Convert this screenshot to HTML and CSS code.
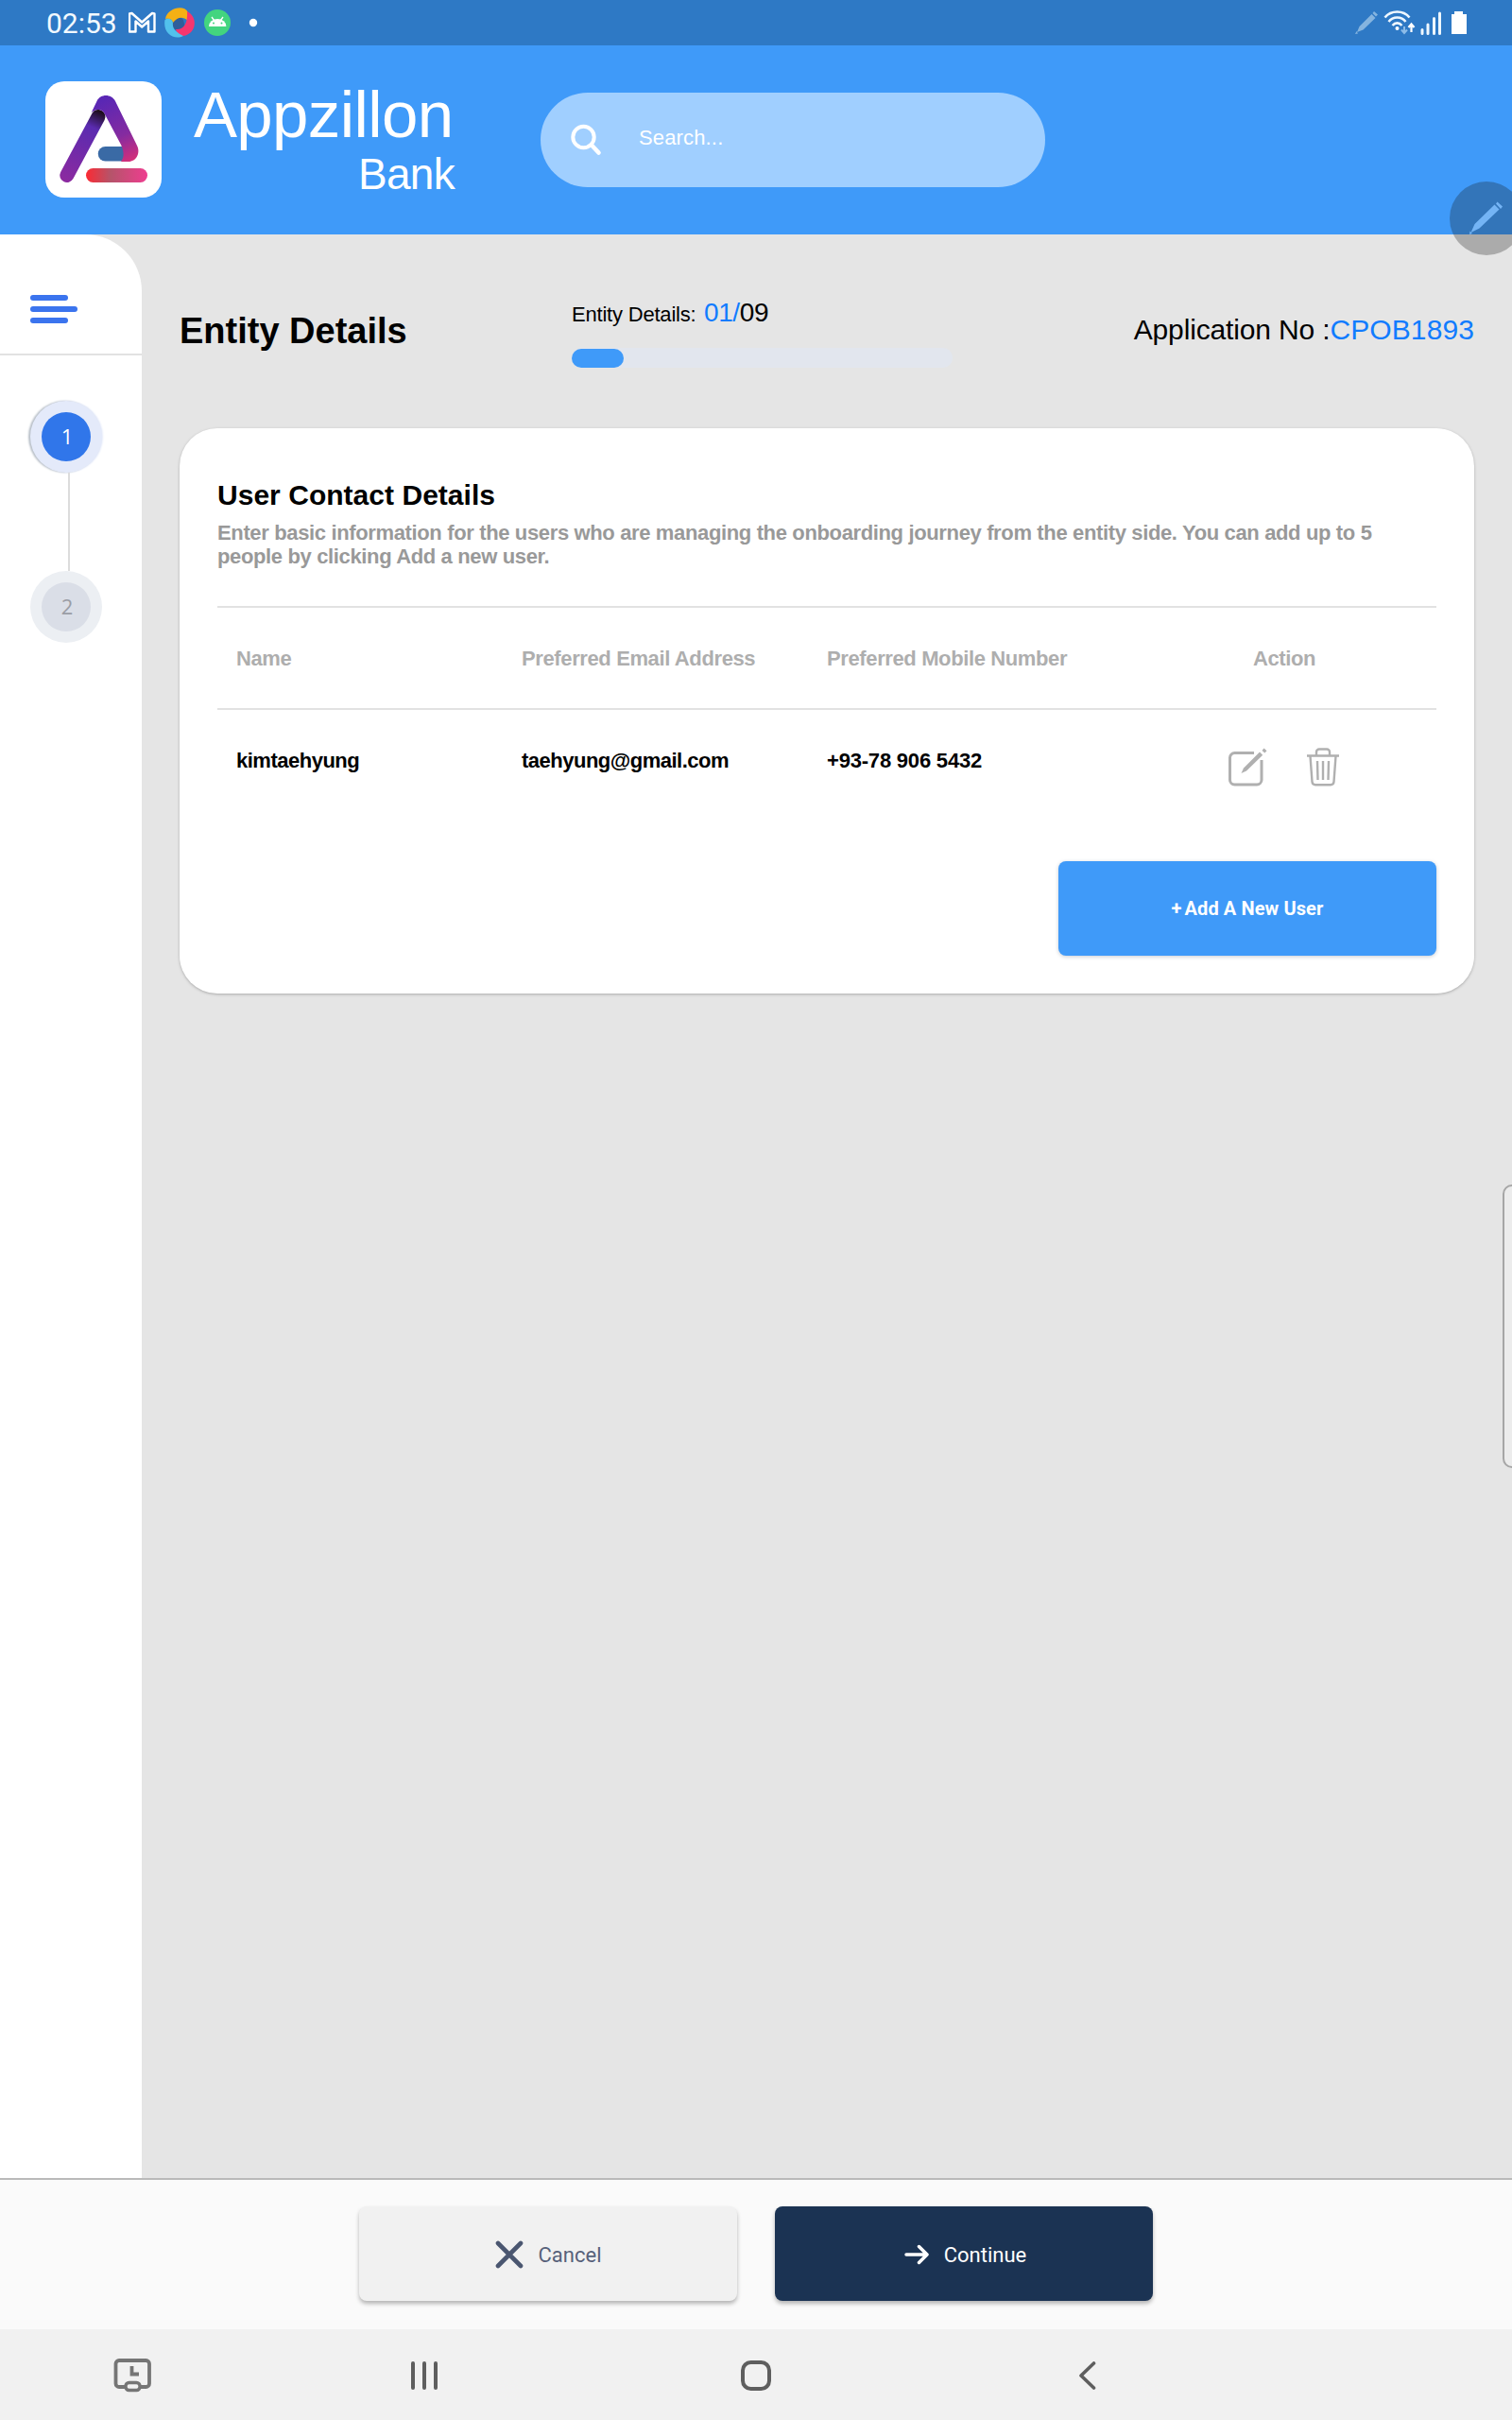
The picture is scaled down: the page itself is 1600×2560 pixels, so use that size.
FILE: index.html
```html
<!DOCTYPE html>
<html lang="en">
<head>
<meta charset="utf-8">
<title>Appzillon Bank - Entity Details</title>
<link rel="stylesheet" href="styles.css">
</head>
<body>
<div class="screen">
  <div class="status-bar">
    <span class="clock">02:53</span>
    <svg class="status-left" width="148" height="34" viewBox="0 0 148 34">
      <path d="M1 26.500V7.500L3.500 7l10.700 9.500L25 7l2.500.5v19H21v-11L14.200 21.500 7.500 15.500v11z" fill="none" stroke="#fff" stroke-width="2.400" stroke-linejoin="round"/>
      <g>
        <path d="M46 14C49 10 55 10 58 14L60 22L52 26L46 22z" fill="#2f5e9a"/>
        <path d="M39 13C41 2 58-3 63 6L63 15C57 10 52 11 47 17C46 13 43 12 39 13z" fill="#f5b014"/>
        <path d="M62 5C74 11 72 29 58 31C53 30 51 28 50 24C58 25 63 18 62 5z" fill="#f5366f"/>
        <path d="M38.500 14C41 12 46 12 47 17C46 24 51 27 58 31C48 36 36 28 38.500 14z" fill="#52c1ec"/>
      </g>
      <circle cx="94" cy="17" r="14" fill="#43d57f"/>
      <path d="M85 21a9.200 8 0 0 1 18.400 0z" fill="#fff"/>
      <path d="M88 11l2.500 3.500M100 11l-2.500 3.500" stroke="#fff" stroke-width="1.300"/>
      <circle cx="90" cy="17.500" r="1" fill="#43d57f"/><circle cx="98.500" cy="17.500" r="1" fill="#43d57f"/>
      <circle cx="132" cy="17" r="4.200" fill="#fff"/>
    </svg>
    <svg class="status-right" width="122" height="26" viewBox="0 0 122 26">
      <g fill="#85b4df"><path d="M4 23l2.500-6L19.500 4l4 4L10.500 20.500zM20.500 3l1.500-2 4 3.500-2 2zM3.500 22l1.500 2.500-3 .5z"/></g>
      <g fill="none" stroke="#eef7ff" stroke-width="2.600">
        <path d="M33.500 7.500C40-.500 53-.500 59.500 7.500M37.500 12C42 6 51 6 55.500 12M41.500 16C44.500 12.500 48.500 12.500 51.500 16"/>
      </g>
      <circle cx="46.500" cy="19" r="2" fill="#fff"/>
      <path d="M54 17v7M51 20.500l3 3.500 3-3.500" fill="none" stroke="#8dbce8" stroke-width="2"/>
      <path d="M61.500 23v-8M58.500 18l3-3.500 3 3.500" fill="none" stroke="#fff" stroke-width="2.200"/>
      <path d="M73 24.500v-4M79 24.500V15M85.500 24.500V8.500M91.500 24.500V3" stroke="#eef7ff" stroke-width="3" stroke-linecap="round"/>
      <path d="M107 1h9v3h4v21h-16V4h3z" fill="#fff"/>
    </svg>
  </div>

  <header class="header">
    <div class="logo">
      <svg width="123" height="123" viewBox="0 0 123 123">
        <defs>
          <linearGradient id="legLeft" x1="56" y1="26" x2="20" y2="104" gradientUnits="userSpaceOnUse"><stop offset=".05" stop-color="#1c0c18"/><stop offset=".27" stop-color="#5a2bb0"/><stop offset="1" stop-color="#8b2aa0"/></linearGradient>
          <linearGradient id="legRight" x1="62" y1="20" x2="90" y2="84" gradientUnits="userSpaceOnUse"><stop offset="0" stop-color="#5a27b4"/><stop offset=".6" stop-color="#852ba0"/><stop offset="1" stop-color="#d22f7a"/></linearGradient>
          <linearGradient id="base" x1="43" y1="0" x2="108" y2="0" gradientUnits="userSpaceOnUse"><stop offset="0" stop-color="#fb2a33"/><stop offset=".4" stop-color="#b5546a"/><stop offset="1" stop-color="#ee3d90"/></linearGradient>
        </defs>
        <path d="M56 37.500L22.800 99.500" stroke="url(#legLeft)" stroke-width="15" stroke-linecap="round"/>
        <path d="M63.500 69H86V84.500H63.500a7.750 7.750 0 0 1 0-15.500z" fill="#3a6aa5"/>
        <path d="M48.500 33.500L54.500 21C58 13 70 13 74 21L97 68C101 76 96 85 88 85H80C84 80 83 74 80 67L63.500 36C61 29 53 28 48.500 33.500z" fill="url(#legRight)"/>
        <rect x="43" y="92" width="65" height="15" rx="7.500" fill="url(#base)"/>
      </svg>
    </div>
    <div class="brand"><span class="brand-name">Appzillon</span><span class="brand-sub">Bank</span></div>
    <div class="search">
      <svg width="34" height="34" viewBox="0 0 34 34" fill="none" stroke="#fff"><circle cx="13.500" cy="14" r="11.200" stroke-width="4"/><path d="M22 22.500l7.500 8" stroke-width="4.600" stroke-linecap="round"/></svg>
      <span>Search...</span>
    </div>
  </header>

  <div class="body">
    <aside class="sidebar">
      <div class="menu"><i></i><i class="long"></i><i></i></div>
      <div class="steps">
        <div class="step active"><b>1</b></div>
        <div class="link"></div>
        <div class="step"><b>2</b></div>
      </div>
    </aside>
    <main class="main">
      <div class="title-row">
        <h1>Entity Details</h1>
        <div class="progress">
          <div class="progress-label"><span class="pl-name">Entity Details:</span><span class="pl-count"><em>01/</em>09</span></div>
          <div class="track"><div class="fill"></div></div>
        </div>
        <div class="app-no">Application No :<em>CPOB1893</em></div>
      </div>
      <section class="card">
        <h2>User Contact Details</h2>
        <p class="desc">Enter basic information for the users who are managing the onboarding journey from the entity side. You can add up to 5<br>people by clicking Add a new user.</p>
        <div class="row head"><span>Name</span><span>Preferred Email Address</span><span>Preferred Mobile Number</span><span>Action</span></div>
        <div class="row data"><span>kimtaehyung</span><span>taehyung@gmail.com</span><span class="phone">+93-78 906 5432</span>
          <span class="icons">
            <svg width="42" height="42" viewBox="0 0 42 42" fill="none" stroke="#b0b0b0"><path d="M27 6.500H6.500a5 5 0 0 0-5 5V35a5 5 0 0 0 5 5H30a5 5 0 0 0 5-5V14" stroke-width="3"/><path d="M13.500 28l2.500-5.500L33 5.500l3.200 3.200L19 25.500z" fill="#b0b0b0" stroke="none"/><path d="M35.500 4l2-2.500 3 2.800-2.200 2.200z" fill="#b0b0b0" stroke="none"/></svg>
            <svg width="36" height="42" viewBox="0 0 36 42" fill="none" stroke="#b0b0b0" stroke-width="2.400"><path d="M1 9.500h34M11 9V5.500a3 3 0 0 1 3-3h8a3 3 0 0 1 3 3V9M4.500 10l2 27a3.500 3.500 0 0 0 3.500 3.200h16a3.500 3.500 0 0 0 3.500-3.200l2-27M12 15l.5 20M18 15v20M24 15l-.5 20"/></svg>
          </span>
        </div>
        <button class="add"><span>+</span><span>Add A New User</span></button>
      </section>
    </main>
  </div>

  <footer class="actions">
    <button class="btn cancel"><svg width="30" height="30" viewBox="0 0 30 30" stroke="#4a5670" stroke-width="4.600" stroke-linecap="round"><path d="M3 3l24 24M27 3L3 27"/></svg><span>Cancel</span></button>
    <button class="btn continue"><svg width="26" height="22" viewBox="0 0 26 22" fill="none" stroke="#fff" stroke-width="3.500" stroke-linecap="round" stroke-linejoin="round"><path d="M2 11H23.500M15.500 2.500L24 11l-8.500 8.500"/></svg><span>Continue</span></button>
  </footer>

  <nav class="nav">
    <svg class="n-clip" width="40" height="36" viewBox="0 0 40 36" fill="none" stroke="#757575" stroke-width="3.800"><path d="M12 30H6a3.500 3.500 0 0 1-3.500-3.500V5.500A3.500 3.500 0 0 1 6 2H34.500A3.500 3.500 0 0 1 38 5.500V26.500a3.500 3.500 0 0 1-3.500 3.500H28"/><path d="M19.500 8v8.500H27"/><rect x="13" y="25.500" width="15" height="8" rx="3.500" stroke-width="3.400"/></svg>
    <svg class="n-recent" width="30" height="32" viewBox="0 0 30 32" stroke="#5e5e5e" stroke-width="4" stroke-linecap="round"><path d="M3 3v26M15 3v26M27 3v26"/></svg>
    <svg class="n-home" width="32" height="34" viewBox="0 0 32 34" fill="none" stroke="#5e5e5e" stroke-width="4"><rect x="2" y="3" width="28" height="28" rx="8.500"/></svg>
    <svg class="n-back" width="20" height="32" viewBox="0 0 20 32" fill="none" stroke="#5e5e5e" stroke-width="3.600" stroke-linecap="round" stroke-linejoin="round"><path d="M17.500 3L4 16l13.500 13"/></svg>
  </nav>

  <div class="pen-bubble"><svg width="36" height="36" viewBox="0 0 36 36" fill="#74b4f5"><path d="M2.500 33l4-9L27.500 3.500l5 5L11.500 28.500zM29 2.500L30.500.5l5.500 5-2 2.500zM1.500 31.500l2.500 2.500-3 1z"/></svg></div>
  <div class="edge-handle"></div>
</div>
</body>
</html>
```
FILE: styles.css
```css
* { box-sizing: border-box; }
body { margin: 0; font-family: "Liberation Sans", Arial, sans-serif; color: #000; }
em { font-style: normal; color: #117cff; }
svg { display: block; flex: none; }
button { border: 0; font: inherit; }
span { white-space: nowrap; }
.screen { position: relative; width: 1600px; height: 2560px; overflow: hidden; display: flex; flex-direction: column; background: #e5e5e5; }

.status-bar { height: 48px; background: #2e79c5; display: flex; align-items: center; padding: 0 46px 0 49px; color: #f2f9ff; }
.clock { font: 30px/48px Roboto, sans-serif; width: 75px; padding-top: 1px; }
.status-left { margin-left: 12px; }
.status-right { margin-left: auto; }

.header { height: 200px; background: #3f9af9; display: flex; align-items: flex-start; padding: 38px 0 0 48px; color: #fff; }
.logo { width: 123px; height: 123px; border-radius: 20px; background: #fff; }
.brand { width: 276px; margin-left: 34px; display: flex; flex-direction: column; align-items: flex-end; }
.brand-name { font-size: 69px; line-height: 72px; letter-spacing: -.6px; margin-right: 1.5px; }
.brand-sub { font-size: 46px; line-height: 52px; letter-spacing: -.7px; }
.search { margin: 12px 0 0 91px; width: 534px; height: 100px; border-radius: 50px; background: #a0cfff; display: flex; align-items: center; padding: 0 0 0 32px; font-size: 22px; letter-spacing: .15px; }
.search span { margin: -4px 0 0 38px; }

.body { height: 2056px; display: flex; }
.sidebar { width: 150px; background: #fff; border-radius: 0 60px 0 0; }
.menu { height: 128px; border-bottom: 2px solid #e2e2e2; padding: 64px 0 0 32px; display: flex; flex-direction: column; gap: 6px; }
.menu i { width: 40px; height: 6px; border-radius: 3px; background: #3b74ee; }
.menu i.long { width: 50px; }
.steps { padding: 48px 0 0 32px; }
.step { width: 76px; height: 76px; border-radius: 50%; background: #eceff3; display: flex; align-items: center; justify-content: center; }
.step b { width: 52px; height: 52px; border-radius: 50%; background: #dadee7; color: #9a9da5; font: 22px/51px "Open Sans", sans-serif; text-align: center; padding-left: 2px; }
.step.active { background: #e4eafa; box-shadow: -2px 0 2px #b9c0c9, 1px 0 2px #e4eafa; }
.step.active b { background: #3076ea; color: #fff; }
.link { width: 2px; height: 104px; margin-left: 40px; background: #dcdcdc; }

.main { flex: 1; padding: 0 40px; }
.title-row { height: 205px; display: flex; align-items: flex-start; }
h1 { margin: 80px 0 0; width: 415px; font-size: 38px; line-height: 44px; }
.progress { width: 403px; padding-top: 67px; }
.progress-label { height: 32px; display: flex; align-items: baseline; }
.pl-name { font-size: 22px; width: 140px; letter-spacing: -.2px; }
.pl-count { font-size: 28px; line-height: 32px; letter-spacing: -.4px; }
.track { margin-top: 21px; height: 21px; border-radius: 10px; background: #e2e6ee; padding-top: 1px; }
.fill { width: 55px; height: 20px; border-radius: 10px; background: #3f9af9; }
.app-no { margin: 83px 0 0 auto; font-size: 30px; line-height: 36px; white-space: nowrap; letter-spacing: -.15px; }
.app-no em { letter-spacing: .1px; }

.card { height: 598px; padding: 53px 40px 40px; border-radius: 40px; background: #fff; box-shadow: 0 1px 3px #aaa; display: flex; flex-direction: column; }
h2 { margin: 0; font-size: 30px; line-height: 36px; letter-spacing: .03px; }
.desc { margin: 9px 0 0; height: 90px; font-size: 22px; line-height: 25px; font-weight: bold; letter-spacing: -.36px; color: #999; white-space: nowrap; }
.row { height: 108px; border-top: 2px solid #e2e2e2; display: grid; grid-template-columns: 302px 323px 451px 1fr; padding-left: 20px; font-size: 22px; font-weight: bold; line-height: 108px; letter-spacing: -.38px; }
.head { color: #aeaeae; }
.data { letter-spacing: -.5px; }
.phone { letter-spacing: -.2px; }
.icons { display: flex; gap: 40px; padding-top: 39px; margin-left: -26px; line-height: 0; }
.add { margin: 54px 0 0 auto; width: 400px; height: 100px; flex: none; border-radius: 8px; background: #3f9af9; color: #fff; font: bold 20px Roboto, sans-serif; letter-spacing: .1px; display: flex; align-items: center; justify-content: center; gap: 3px; box-shadow: 0 1px 4px #c5cbd3; }

.actions { height: 160px; background: #fafafa; border-top: 2px solid #bababa; display: flex; justify-content: center; gap: 40px; padding-top: 28px; }
.btn { width: 400px; height: 100px; border-radius: 8px; font: 22px Roboto, sans-serif; display: flex; align-items: center; justify-content: center; gap: 16px; padding: 2px 0 0; box-shadow: 0 3px 4px #b5b5b5; }
.cancel { background: #f1f1f1; color: #57617a; }
.continue { background: #1b3353; color: #fff; padding-left: 3px; }

.nav { height: 96px; background: #f1f1f1; display: flex; align-items: center; padding-top: 2px; }
.n-clip { margin-left: 120px; }
.n-recent { margin-left: 274px; }
.n-home { margin-left: 320px; }
.n-back { margin-left: 324px; }

.pen-bubble { position: absolute; left: 1534px; top: 192px; width: 78px; height: 78px; border-radius: 50%; background: rgba(20,20,20,.28); padding: 21px 0 0 20px; }
.edge-handle { position: absolute; left: 1590px; top: 1253px; width: 20px; height: 300px; border: 2px solid #a6a6a6; border-radius: 10px; background: #ececec; }
```
